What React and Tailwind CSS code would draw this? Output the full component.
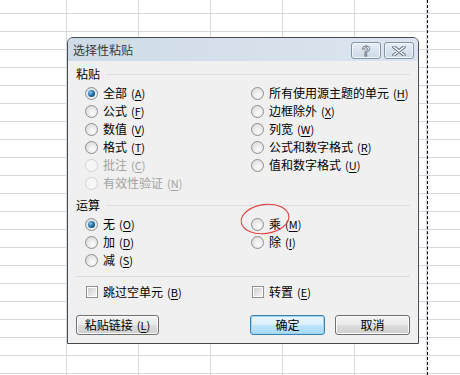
import React from 'react';

const font = "font-['Noto_Sans_CJK_SC','Noto_Sans',sans-serif]";

function Key({ k }) {
  return (
    <span className="ml-[4px] text-[11px]">
      (<span className="underline underline-offset-[2px]">{k}</span>)
    </span>
  );
}

function Radio({ label, k, checked, disabled }) {
  return (
    <div className="flex h-[18px] items-center">
      <span
        className={`flex h-[13px] w-[13px] items-center justify-center rounded-full border ${
          disabled
            ? 'border-[#d2d2d2] bg-[#f6f6f6]'
            : 'border-[#8e8f8f] bg-[radial-gradient(circle_at_60%_65%,#fdfdfd,#d4d4d4)]'
        }`}
      >
        {checked && (
          <span className="h-[7px] w-[7px] rounded-full bg-[radial-gradient(circle_at_35%_35%,#7cc4f0,#155f94_60%,#0b3f66)]" />
        )}
      </span>
      <span className={`ml-[5px] ${disabled ? 'text-[#a3a3a3]' : 'text-black'}`}>
        {label}
        <Key k={k} />
      </span>
    </div>
  );
}

function Check({ label, k }) {
  return (
    <div className="flex h-[18px] items-center">
      <span className="flex h-[12px] w-[12px] items-center justify-center border border-[#8e8f8f] bg-white">
        <span className="h-[8px] w-[8px] bg-[linear-gradient(135deg,#cfcfcf,#f4f4f4)]" />
      </span>
      <span className="ml-[5px] text-black">
        {label}
        <Key k={k} />
      </span>
    </div>
  );
}

function Section({ title }) {
  return (
    <div className="flex h-[18px] items-center pr-[8px]">
      <span className="text-black">{title}</span>
      <span className="ml-[6px] h-px flex-1 bg-[#d9dde2]" />
    </div>
  );
}

function Btn({ children, width, primary }) {
  return (
    <button
      type="button"
      className={`flex h-[20px] items-center justify-center rounded-[3px] border text-black ${width} ${
        primary
          ? 'border-[#3c7fb1] bg-[linear-gradient(#eaf6fd_0%,#d9f0fc_50%,#bee6fd_50%,#a7d9f5_100%)] shadow-[inset_0_0_0_1px_#9fd5f4]'
          : 'border-[#707070] bg-[linear-gradient(#f2f2f2_0%,#ebebeb_50%,#dddddd_50%,#cfcfcf_100%)] shadow-[inset_0_0_0_1px_#fcfcfc]'
      }`}
    >
      {children}
    </button>
  );
}

function TitleButton({ children, width }) {
  return (
    <div
      className={`flex h-[17px] items-center justify-center rounded-[3px] border border-[#8193a8] bg-[linear-gradient(#e7eef6,#ccd9e7)] shadow-[inset_0_0_0_1px_#f3f7fb] ${width}`}
    >
      {children}
    </div>
  );
}

export default function App() {
  return (
    <div
      className={`relative h-[375px] w-[460px] overflow-hidden bg-white bg-[linear-gradient(to_right,#d6d9e0_1px,transparent_1px),linear-gradient(to_bottom,#d6d9e0_1px,transparent_1px)] bg-[size:72px_18px] bg-[position:66px_13px] text-[12px] leading-[18px] ${font}`}
    >
      {/* page break */}
      <div className="absolute left-[427px] top-0 h-[375px] border-l border-dashed border-black" />

      <div className="absolute left-[67px] top-[37px] w-[352px] overflow-hidden rounded-t-[6px] border border-[#474c52] bg-[#f0f0f0]">
        <div className="flex h-[23px] items-start justify-between bg-[linear-gradient(to_right,#cfdbe8,#dce5ef)] pl-[5px] pr-[4px]">
          <span className="mt-[4px] text-[12px] leading-[16px] text-[#3a3a3a]">选择性粘贴</span>
          <div className="mt-[4px] flex gap-[3px]">
            <TitleButton width="w-[30px]">
              <span className="text-[14px] font-bold leading-none text-white [-webkit-text-stroke:0.8px_#5c6d80] [font-family:'Liberation_Sans',sans-serif]">
                ?
              </span>
            </TitleButton>
            <TitleButton width="w-[30px]">
              <svg width="14" height="10" viewBox="0 0 14 10">
                <path d="M2 1 L12 9 M12 1 L2 9" stroke="#5c6d80" strokeWidth="3.4" strokeLinecap="round" />
                <path d="M2 1 L12 9 M12 1 L2 9" stroke="#ffffff" strokeWidth="1.6" strokeLinecap="round" />
              </svg>
            </TitleButton>
          </div>
        </div>

        <div className="pl-[8px] pt-[4px] pb-[8px]">
          <Section title="粘贴" />
          <div className="ml-[9px] mt-[1px] grid grid-cols-[166px_1fr]">
            <div>
              <Radio label="全部" k="A" checked />
              <Radio label="公式" k="F" />
              <Radio label="数值" k="V" />
              <Radio label="格式" k="T" />
              <Radio label="批注" k="C" disabled />
              <Radio label="有效性验证" k="N" disabled />
            </div>
            <div>
              <Radio label="所有使用源主题的单元" k="H" />
              <Radio label="边框除外" k="X" />
              <Radio label="列宽" k="W" />
              <Radio label="公式和数字格式" k="R" />
              <Radio label="值和数字格式" k="U" />
            </div>
          </div>

          <div className="mt-[4px]">
            <Section title="运算" />
          </div>
          <div className="ml-[9px] mt-[1px] grid grid-cols-[166px_1fr]">
            <div>
              <Radio label="无" k="O" checked />
              <Radio label="加" k="D" />
              <Radio label="减" k="S" />
            </div>
            <div>
              <Radio label="乘" k="M" />
              <Radio label="除" k="I" />
            </div>
          </div>

          <div className="mr-[8px] mt-[7px] h-px bg-[#d9dde2]" />

          <div className="ml-[10px] mt-[6px] grid grid-cols-[166px_1fr]">
            <Check label="跳过空单元" k="B" />
            <Check label="转置" k="E" />
          </div>

          <div className="mt-[14px] flex items-center pr-[8px]">
            <Btn width="w-[83px]">
              粘贴链接
              <Key k="L" />
            </Btn>
            <div className="flex-1" />
            <Btn width="w-[75px]" primary>
              确定
            </Btn>
            <div className="w-[10px]" />
            <Btn width="w-[75px]">取消</Btn>
          </div>
        </div>
      </div>

      {/* hand-drawn annotation */}
      <svg className="absolute left-[236px] top-[198px]" width="60" height="42" viewBox="0 0 60 42">
        <ellipse cx="29" cy="21" rx="24" ry="14.5" transform="rotate(-8 29 21)" fill="none" stroke="#e2403f" strokeWidth="1.1" />
      </svg>
    </div>
  );
}
